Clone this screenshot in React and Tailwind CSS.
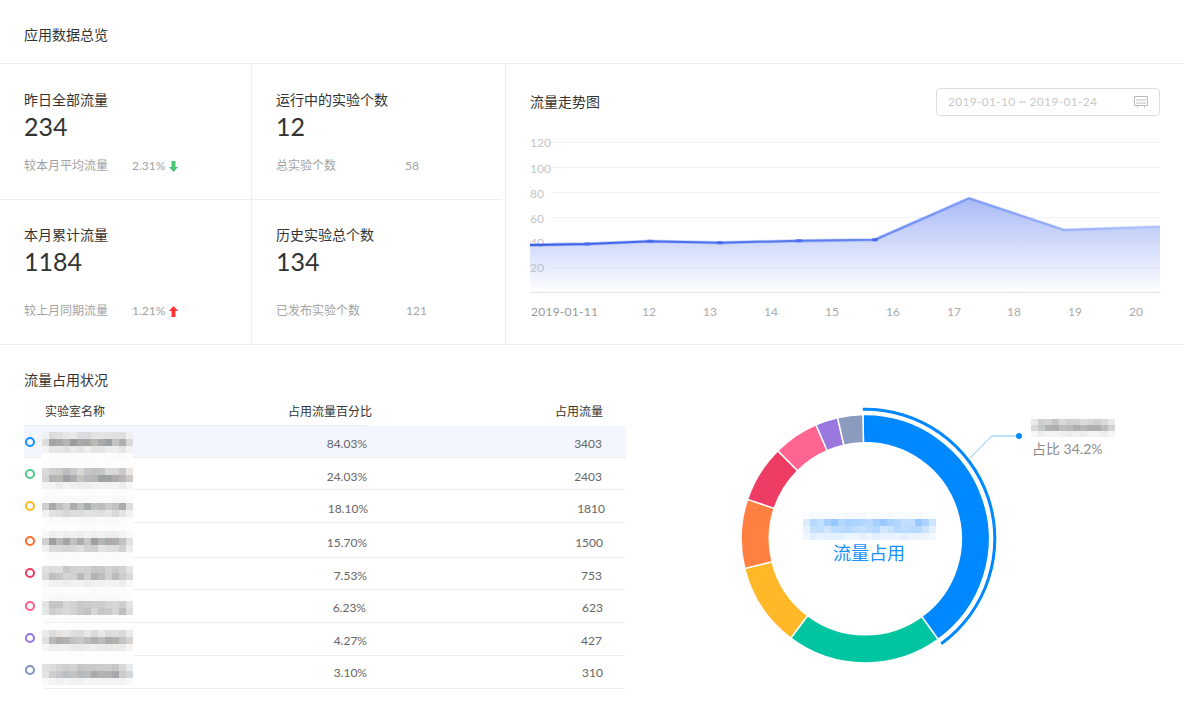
import React from 'react';

const stats = [
  { title: '昨日全部流量', value: '234', note: '较本月平均流量', extra: '2.31%', arrow: 'down', extraClass: 'left-[108px]' },
  { title: '运行中的实验个数', value: '12', note: '总实验个数', extra: '58', extraClass: 'left-[129px]' },
  { title: '本月累计流量', value: '1184', note: '较上月同期流量', extra: '1.21%', arrow: 'up', extraClass: 'left-[108px]' },
  { title: '历史实验总个数', value: '134', note: '已发布实验个数', extra: '121', extraClass: 'left-[130px]' },
];

const rows = [
  { color: 'border-[#1890ff]', pct: '84.03%', val: '3403', h: 'h-[32px]', top: 'top-[6px]', dot: '', shift: 'translate-y-[2px]', bands: [0.2, 0.55, 0.15, 0.02], pctW: 'w-[343px]', valW: 'w-[235px]', active: true },
  { color: 'border-[#4ecb8a]', pct: '24.03%', val: '2403', h: 'h-[32px]', top: 'top-[3px]', dot: '', shift: 'translate-y-[3px]', bands: [0.02, 0.35, 0.5, 0.1, 0.02], pctW: 'w-[343px]', valW: 'w-[235px]' },
  { color: 'border-[#ffb728]', pct: '18.10%', val: '1810', h: 'h-[33px]', top: 'top-[6px]', dot: '-translate-y-[1px]', shift: 'translate-y-[2px]', bands: [0.04, 0.45, 0.22, 0.04], pctW: 'w-[344px]', valW: 'w-[237px]' },
  { color: 'border-[#ff6a2b]', pct: '15.70%', val: '1500', h: 'h-[35px]', top: 'top-[1px]', dot: '', shift: 'translate-y-[2px]', bands: [0.02, 0.1, 0.5, 0.25, 0.03], pctW: 'w-[343px]', valW: 'w-[236px]' },
  { color: 'border-[#ef3a64]', pct: '7.53%', val: '753', h: 'h-[32px]', top: 'top-[1px]', dot: '-translate-y-[1px]', shift: 'translate-y-[2px]', bands: [0.02, 0.3, 0.4, 0.1, 0.02], pctW: 'w-[343px]', valW: 'w-[235px]' },
  { color: 'border-[#ff5f8f]', pct: '6.23%', val: '623', h: 'h-[33px]', top: 'top-[4px]', dot: '-translate-y-[1px]', shift: 'translate-y-[1px]', bands: [0.04, 0.3, 0.35, 0.02], pctW: 'w-[342px]', valW: 'w-[237px]' },
  { color: 'border-[#9374e0]', pct: '4.27%', val: '427', h: 'h-[33px]', top: 'top-[0px]', dot: '-translate-y-[2px]', shift: 'translate-y-[1px]', bands: [0.01, 0.2, 0.45, 0.12, 0.01], pctW: 'w-[343px]', valW: 'w-[235px]' },
  { color: 'border-[#7f93bd]', pct: '3.10%', val: '310', h: 'h-[33px]', top: 'top-[1px]', dot: '-translate-y-[3px]', shift: '', bands: [0.01, 0.3, 0.45, 0.08], pctW: 'w-[343px]', valW: 'w-[236px]', last: true },
];

const segments = [
  { color: '#0088ff', from: -1.1, to: 144.1 },
  { color: '#00c5a0', from: 144.1, to: 216.9 },
  { color: '#ffb828', from: 216.9, to: 256.2 },
  { color: '#ff8040', from: 256.2, to: 288.5 },
  { color: '#ef3c64', from: 288.5, to: 315.2 },
  { color: '#ff6590', from: 315.2, to: 336.6 },
  { color: '#9a78e0', from: 336.6, to: 347.1 },
  { color: '#8a9bbd', from: 347.1, to: 358.9 },
];

const points = [[0, 115], [57, 114], [120, 111.3], [190, 112.7], [269, 110.7], [345, 109.7], [439, 68.3], [534, 100], [630, 96.7]];
const ticks = [['120', 12, 4.5], ['100', 37, 5.5], ['80', 62, 5.5], ['60', 87, 5.5], ['40', 112, 5], ['20', 137, 4.5]];
const days = [['12', 119], ['13', 180], ['14', 241], ['15', 302], ['16', 363], ['17', 424], ['18', 484], ['19', 545], ['20', 606]];

const polar = (cx, cy, r, deg) => {
  const a = (deg * Math.PI) / 180;
  return [cx + r * Math.sin(a), cy - r * Math.cos(a)];
};

const arcPath = (cx, cy, r0, r1, from, to) => {
  const [ax, ay] = polar(cx, cy, r1, from);
  const [bx, by] = polar(cx, cy, r1, to);
  const [dx, dy] = polar(cx, cy, r0, to);
  const [ex, ey] = polar(cx, cy, r0, from);
  const big = to - from > 180 ? 1 : 0;
  return `M${ax} ${ay}A${r1} ${r1} 0 ${big} 1 ${bx} ${by}L${dx} ${dy}A${r0} ${r0} 0 ${big} 0 ${ex} ${ey}Z`;
};

// stable pseudo random so the mosaic looks the same each render
const noise = (i, j, seed) => {
  const x = Math.sin(i * 12.9898 + j * 78.233 + seed * 37.719) * 43758.5453;
  return x - Math.floor(x);
};

const Mosaic = ({ bands, cols = 13, cell = 7, cellH = 7, seed = 1, blue = false }) => (
  <div className="flex flex-col">
    {bands.map((band, j) => (
      <div key={j} className="flex">
        {Array.from({ length: cols }).map((_, i) => {
          const edge = i === 0 || i === cols - 1 ? 0.55 : 1;
          const v = band * edge * (0.7 + 0.55 * noise(i, j, seed));
          const tint = (noise(j, i, seed + 3) - 0.5) * 12 * band;
          const color = blue
            ? `rgb(${255 - v * 170}, ${255 - v * 90}, 255)`
            : `rgb(${255 - v * 155 + tint}, ${255 - v * 155}, ${255 - v * 155 - tint})`;
          return <div key={i} style={{ width: cell, height: cellH, background: color }} />;
        })}
      </div>
    ))}
  </div>
);

const Arrow = ({ dir }) => (
  <svg width="9" height="11" viewBox="0 0 9 11" className="ml-[4px]">
    {dir === 'up' ? (
      <path d="M4.5 0L9 5H6.5V11H2.5V5H0Z" fill="#ff3333" />
    ) : (
      <path d="M4.5 11L9 6H6.5V0H2.5V6H0Z" fill="#48c774" />
    )}
  </svg>
);

const StatCard = ({ stat, bottom, right }) => (
  <div className={`relative shrink-0 pl-[24px] ${right ? 'w-[250px]' : 'w-[252px] border-r border-[#eeeeee]'} ${bottom ? 'h-[144px] pt-[25px]' : 'h-[136px] pt-[26px] border-b border-[#eeeeee]'}`}>
    <div className="text-[14px] leading-[20px] text-[#333333]">{stat.title}</div>
    <div className="text-[25px] leading-[32px] text-[#333333]">{stat.value}</div>
    <div className={`relative flex items-center text-[12px] leading-[20px] text-[#a3a3a3] ${bottom ? 'mt-[24px]' : 'mt-[14px]'}`}>
      <span>{stat.note}</span>
      <span className={`absolute top-0 flex items-center ${stat.extraClass}`}>
        {stat.extra}
        {stat.arrow && <Arrow dir={stat.arrow} />}
      </span>
    </div>
  </div>
);

const TrendChart = () => {
  const line = points.map((p) => p.join(' ')).join('L');
  return (
    <svg width="630" height="200" viewBox="0 0 630 200" className="mt-[14px] block">
      <defs>
        <linearGradient id="areaFill" gradientUnits="userSpaceOnUse" x1="0" y1="68" x2="0" y2="162">
          <stop offset="0" stopColor="#a9baf6" />
          <stop offset="1" stopColor="#a9baf6" stopOpacity="0.02" />
        </linearGradient>
        <linearGradient id="lineStroke" gradientUnits="userSpaceOnUse" x1="0" y1="0" x2="630" y2="0">
          <stop offset="0" stopColor="#3a5fe8" />
          <stop offset="0.45" stopColor="#5a7cf0" />
          <stop offset="0.7" stopColor="#7f9bf8" />
          <stop offset="1" stopColor="#b3c3fa" />
        </linearGradient>
      </defs>
      {ticks.map(([label, y, dy]) => (
        <g key={label}>
          <line x1="21" x2="630" y1={y + 0.5} y2={y + 0.5} stroke="#f2f2f2" />
          <text x="0" y={y + dy} fontSize="12" fill="#c4c4c4">{label}</text>
        </g>
      ))}
      <path d={`M${line}L630 162L0 162Z`} fill="url(#areaFill)" />
      <path d={`M${line}`} fill="none" stroke="url(#lineStroke)" strokeWidth="3.5" opacity="0.3" />
      <path d={`M${line}`} fill="none" stroke="url(#lineStroke)" strokeWidth="2" />
      {points.slice(1, 6).map(([x, y]) => (
        <rect key={x} x={x - 3} y={y - 1.5} width="6" height="3" rx="1" fill="#4a6ded" />
      ))}
      <line x1="0" x2="630" y1="162.5" y2="162.5" stroke="#e4e4e4" />
      <text x="1" y="186" fontSize="12" fill="#999999" letterSpacing="0.25">2019-01-11</text>
      {days.map(([label, x]) => (
        <text key={label} x={x} y="186" fontSize="12" fill="#aaaaaa" textAnchor="middle">{label}</text>
      ))}
    </svg>
  );
};

const Donut = () => (
  <div className="relative w-[440px] h-[300px] ml-[64px] mt-[55px]">
    <svg width="440" height="300" viewBox="0 0 440 300" className="block">
      {segments.map((s) => (
        <path key={s.color} d={arcPath(175.3, 138.8, 96, 124.2, s.from, s.to)} fill={s.color} stroke="#ffffff" strokeWidth="1.5" />
      ))}
      <path d={arcPath(175.3, 138.8, 128, 131, -1.1, 144.1)} fill="#0088ff" />
      <path d="M280 58L301.5 36H329" fill="none" stroke="#7cc0ff" strokeWidth="1" />
      <circle cx="329" cy="36" r="3" fill="#0088ff" />
    </svg>
    <div className="absolute left-[113px] top-[112px]">
      <Mosaic bands={[0.05, 0.5, 0.35, 0.15]} cols={19} cell={7} cellH={7} seed={9} blue />
    </div>
    <div className="absolute left-[143px] top-[141px] text-[18px] leading-[24px] text-[#1890ff]">流量占用</div>
    <div className="absolute left-[341px] top-[19px]">
      <Mosaic bands={[0.3, 0.45, 0.1]} cols={12} cell={7} cellH={6} seed={5} />
    </div>
    <div className="absolute left-[342px] top-[39px] text-[14px] leading-[20px] text-[#8c8c8c]">占比 34.2%</div>
  </div>
);

const App = () => (
  <div className="w-[1184px] h-[720px] bg-white overflow-hidden font-['Lato','Noto_Sans_CJK_SC',sans-serif]">
    <div className="h-[64px] pl-[24px] pt-[6px] flex items-center border-b border-[#eeeeee] text-[14px] text-[#333333]">应用数据总览</div>

    <div className="flex h-[281px] border-b border-[#eeeeee]">
      <div className="w-[506px] border-r border-[#eeeeee] flex flex-col">
        <div className="flex w-[502px]">
          <StatCard stat={stats[0]} />
          <StatCard stat={stats[1]} right />
        </div>
        <div className="flex w-[502px]">
          <StatCard stat={stats[2]} bottom />
          <StatCard stat={stats[3]} bottom right />
        </div>
      </div>
      <div className="flex-1 pl-[24px] pr-[24px] pt-[24px]">
        <div className="flex items-center justify-between h-[28px]">
          <span className="text-[14px] text-[#333333] relative -top-[1px]">流量走势图</span>
          <div className="w-[224px] h-[28px] border border-[#dddddd] rounded-[4px] flex items-center justify-between pl-[11px] pr-[11px]">
            <span className="text-[12px] text-[#c8c8c8] tracking-[0.3px] whitespace-nowrap">2019-01-10 ~ 2019-01-24</span>
            <svg width="14" height="12" viewBox="0 0 14 12" fill="none" stroke="#bbbbbb">
              <path d="M0.5 0.5H13.5V9.5H0.5Z" />
              <path d="M2 4H12M2 7H12M3.5 9.5V11.5M10.5 9.5V11.5" />
            </svg>
          </div>
        </div>
        <TrendChart />
      </div>
    </div>

    <div className="flex">
      <div className="w-[626px] pl-[24px] shrink-0">
        <div className="text-[14px] leading-[20px] text-[#333333] pt-[25px]">流量占用状况</div>
        <div className="flex items-center h-[36px] pt-[9px] text-[12px] text-[#333333] border-b border-[#eeeeee] w-[343px]">
          <span className="w-[21px]" />
          <span className="whitespace-nowrap">实验室名称</span>
          <span className="ml-auto whitespace-nowrap relative left-[5px]">占用流量百分比</span>
        </div>
        <div className="relative">
          <span className="absolute right-[23px] -top-[24px] text-[12px] leading-[20px] text-[#333333]">占用流量</span>
          {rows.map((row) => (
            <div key={row.pct} className={`relative flex items-center text-[12px] text-[#666666] ${row.h} ${row.active ? 'bg-[#f3f6fe] w-[602px]' : 'w-[601px]'}`}>
              <span className={`absolute right-0 bottom-0 h-px bg-[#eeeeee] ${row.active ? 'left-0' : 'left-[21px]'}`} />
              <span className={`absolute left-[1px] w-[10px] h-[10px] rounded-full border-2 ${row.color} ${row.dot}`} />
              <div className={`absolute left-[18px] ${row.top} z-10`}>
                <Mosaic bands={row.bands} seed={row.val.length + Number(row.val)} />
              </div>
              <div className={`${row.pctW} text-right ${row.shift}`}>{row.pct}</div>
              <div className={`${row.valW} text-right ${row.shift}`}>{row.val}</div>
            </div>
          ))}
        </div>
      </div>
      <Donut />
    </div>
  </div>
);

export default App;
